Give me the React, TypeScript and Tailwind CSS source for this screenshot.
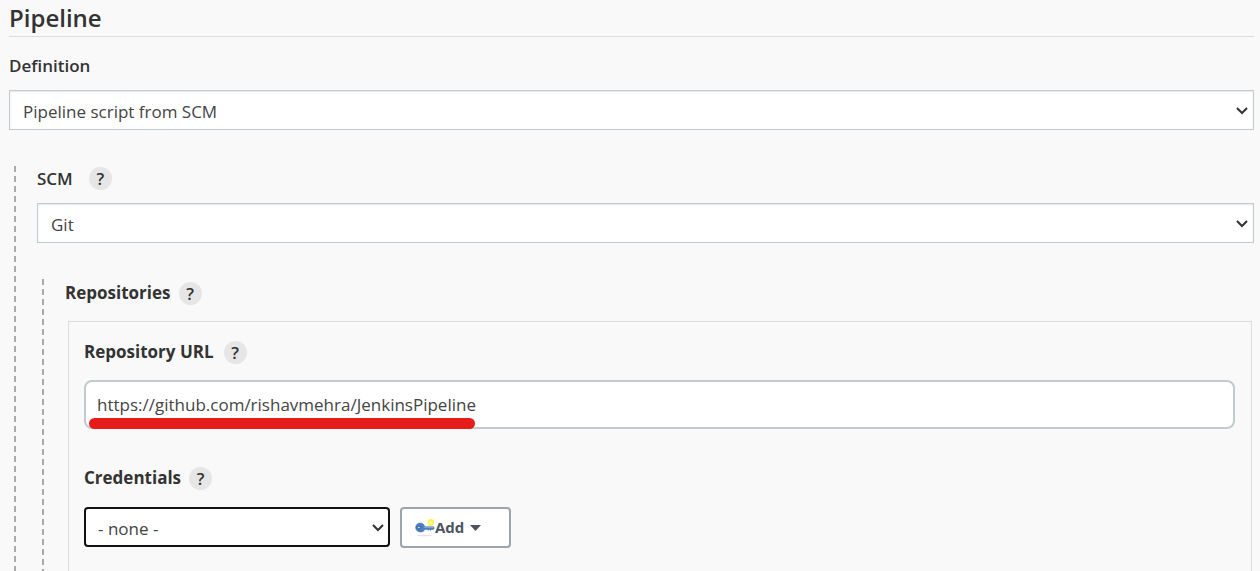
import type { ComponentProps, ReactNode } from 'react'
import clsx from 'clsx'

const REPOSITORY_URL = 'https://github.com/rishavmehra/JenkinsPipeline'

function Chevron() {
  return (
    <svg
      className="pointer-events-none absolute top-1/2 right-1.5 h-3 w-3 -translate-y-1/2"
      viewBox="0 0 12 12"
      fill="none"
      stroke="#333"
      strokeWidth="2"
      aria-hidden="true"
    >
      <path d="M1 4 6 9 11 4" />
    </svg>
  )
}

function Select({ className, children, ...props }: ComponentProps<'select'>) {
  return (
    <div className="relative">
      <select
        className={clsx(
          'block h-10 w-full appearance-none bg-white pt-1 text-[17px] text-[#444] outline-none',
          className
        )}
        {...props}
      >
        {children}
      </select>
      <Chevron />
    </div>
  )
}

function HelpButton({ topic }: { topic: string }) {
  return (
    <button
      type="button"
      aria-label={`Help for feature: ${topic}`}
      className="flex h-[23px] w-[23px] items-center justify-center rounded-full bg-[#e6e6e6] text-[17px] leading-none font-semibold text-[#333]"
    >
      ?
    </button>
  )
}

function Nested({ children }: { children: ReactNode }) {
  return (
    <div className="ml-[5px] flex flex-1">
      <div className="w-0.5 shrink-0 bg-[repeating-linear-gradient(to_bottom,#aaa_0px,#aaa_6px,transparent_6px,transparent_10px)]" />
      <div className="ml-[21px] flex min-w-0 flex-1 flex-col">{children}</div>
    </div>
  )
}

function KeyIcon() {
  return (
    <svg className="h-5 w-5" viewBox="0 0 20 20" aria-hidden="true">
      <ellipse cx="9.500" cy="17.500" rx="8" ry="0.8" fill="#e2e2e2" />
      <circle cx="15.800" cy="4.500" r="3.400" fill="#fdf25a" />
      <circle cx="15.800" cy="4.500" r="1.300" fill="#fffbb8" />
      <path
        d="M5.500 5C2.600 5 .6 7 .6 9.500S2.600 14 5.500 14c2 0 3.600-.9 4.400-2.600h2.200l1 .9 1.200-.9 1.200.9 1.300-.9h1.600l1-1.200-.8-1.500H9.900C9 6.200 7.500 5 5.500 5Z"
        fill="#4a7fc1"
        stroke="#3f72b0"
        strokeWidth="0.5"
      />
      <path d="M9 9.600h9.500" stroke="#8fb4dd" strokeWidth="0.8" />
      <circle cx="3.900" cy="9.500" r="1.400" fill="#d5dde5" stroke="#27486f" strokeWidth="0.8" />
    </svg>
  )
}

export default function App() {
  return (
    <form className="flex min-h-screen flex-col bg-[#f9f9f9] pr-1.5 pl-[9px] font-['Open_Sans','Noto_Sans',sans-serif] text-[17px] text-[#333]">
      <h2 className="h-[37px] border-b border-[#dcdcdc] text-2xl leading-9 font-semibold">
        Pipeline
      </h2>

      <label htmlFor="definition" className="mt-4 mb-3 leading-[25px] font-semibold">
        Definition
      </label>
      <Select id="definition" className="border border-[#c0cbd0] px-[13px] shadow-[inset_0_1px_2px_#0000001a]">
        <option>Pipeline script from SCM</option>
      </Select>

      <div className="mt-9 flex flex-1 flex-col">
        <Nested>
          <div className="mb-3 flex h-[25px] items-center gap-4">
            <label htmlFor="scm" className="font-semibold">SCM</label>
            <HelpButton topic="SCM" />
          </div>
          <Select id="scm" className="border border-[#c0cbd0] px-[13px] shadow-[inset_0_1px_2px_#0000001a]">
            <option>Git</option>
          </Select>

          <div className="mt-9 flex flex-1 flex-col">
            <Nested>
              <div className="flex h-7 items-center gap-2">
                <span className="font-bold">Repositories</span>
                <HelpButton topic="Repositories" />
              </div>

              <div className="mt-3.5 mr-0.5 ml-[3px] flex-1 border border-b-0 border-[#dcdcdc] pt-4 pr-4 pl-[15px]">
                <div className="mb-[14px] flex h-7 items-center gap-2.5">
                  <label htmlFor="url" className="font-bold">Repository URL</label>
                  <HelpButton topic="Repository URL" />
                </div>
                <div className="relative">
                  <input
                    id="url"
                    type="text"
                    defaultValue={REPOSITORY_URL}
                    className="block h-[49px] w-full rounded-lg border-2 border-[#c0cbd0] bg-white px-[11px] text-[17px] text-[#444] outline-none"
                  />
                  <div className="pointer-events-none absolute bottom-0 left-[5px] h-[11px] w-[386px] rounded-full bg-[#e81b1b]" />
                </div>

                <div className="mt-9 mb-4 flex h-[26px] items-center gap-2">
                  <label htmlFor="credentials" className="font-bold">Credentials</label>
                  <HelpButton topic="Credentials" />
                </div>
                <div className="flex gap-2.5">
                  <div className="w-[306px]">
                    <Select id="credentials" className="rounded border-2 border-[#111] px-3">
                      <option>- none -</option>
                    </Select>
                  </div>
                  <button
                    type="button"
                    className="flex h-[41px] w-[111px] items-center rounded border-2 border-[#98a6b0] bg-white pl-[13px] text-[15px] font-bold text-[#4d545d]"
                  >
                    <KeyIcon />
                    Add
                    <svg className="ml-1.5 h-1.5 w-[11px]" viewBox="0 0 11 6" fill="#4d545d" aria-hidden="true">
                      <path d="M0 0h11L5.500 6Z" />
                    </svg>
                  </button>
                </div>
              </div>
            </Nested>
          </div>
        </Nested>
      </div>
    </form>
  )
}
